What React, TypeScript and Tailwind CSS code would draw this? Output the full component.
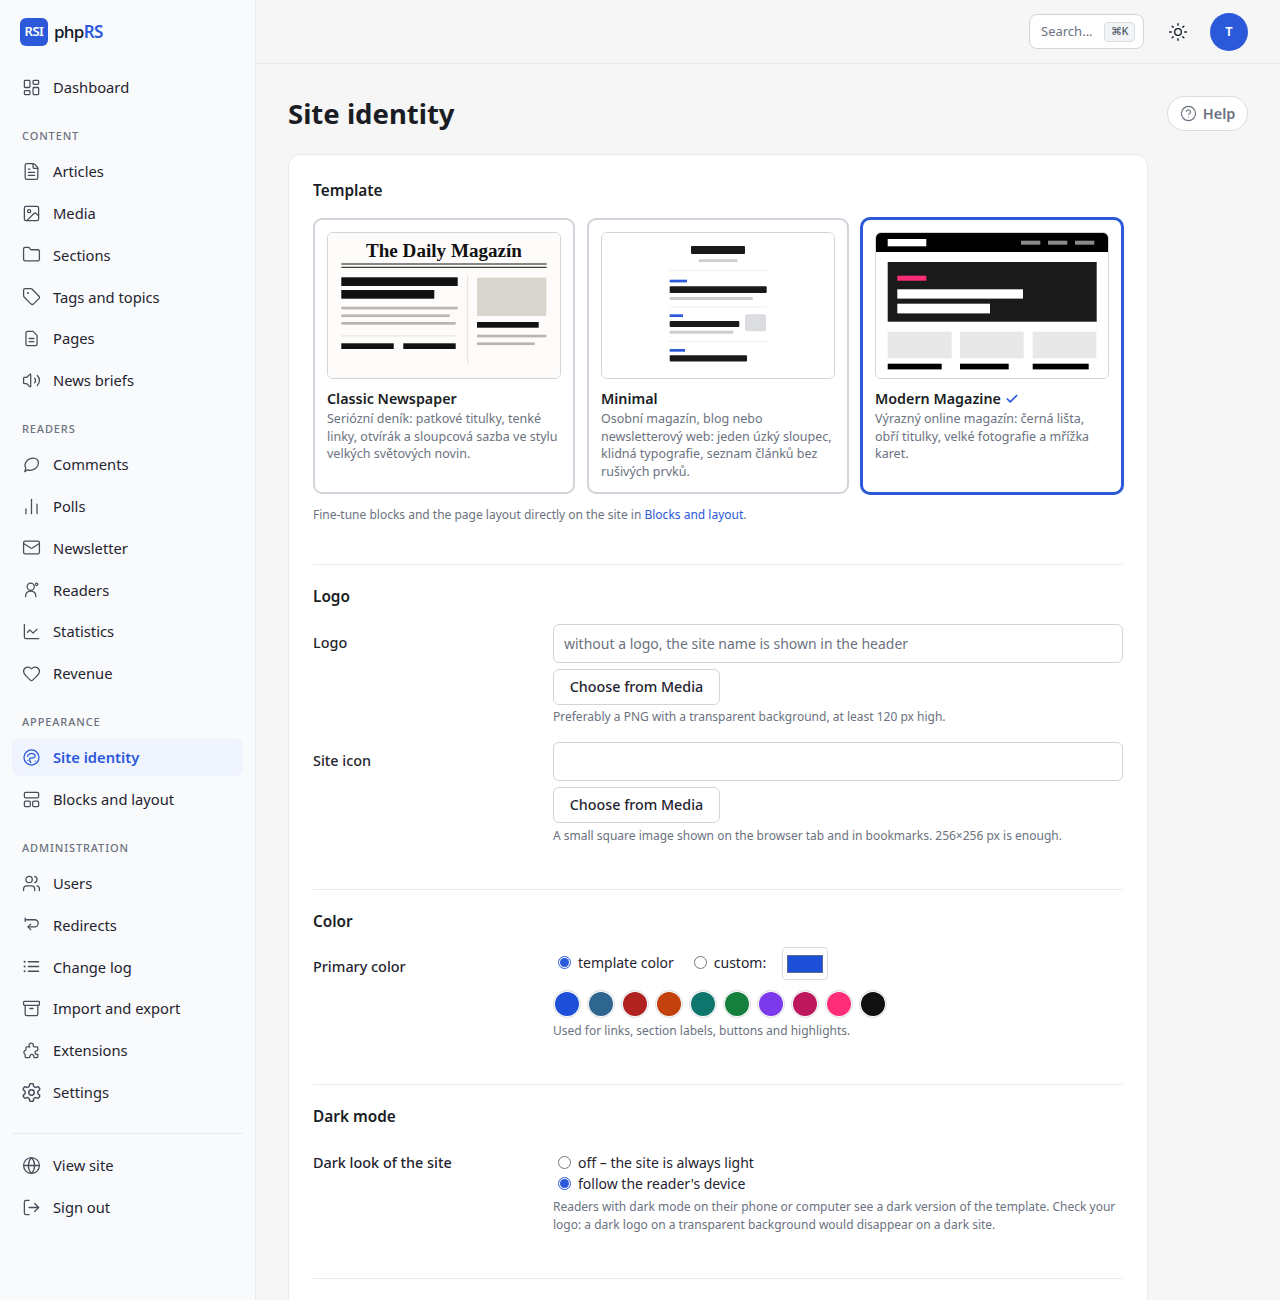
import React from "react";
import {
  LayoutDashboard, FileText, Image, Folder, Tag, Volume2, ChartNoAxesColumn, Mail, ChartLine, Heart, Users, Archive, Globe, LogOut, Sun, CircleHelp, Check,
} from "lucide-react";

const sw = 1.6;

function Svg({ children, vb = "0 0 24 24", strokeWidth, ...p }: any) {
  return (
    <svg viewBox={vb} fill="none" stroke="currentColor" strokeWidth={strokeWidth ?? sw} strokeLinecap="round" strokeLinejoin="round" {...p}>
      {children}
    </svg>
  );
}
function PageIcon(p: any) {
  return <Svg {...p}><path d="M14 3H7a2 2 0 0 0-2 2v14a2 2 0 0 0 2 2h10a2 2 0 0 0 2-2V8z" /><path d="M9 12h6M9 16h6" /></Svg>;
}
function ReaderIcon(p: any) {
  return <Svg {...p}><circle cx="11" cy="8.5" r="4.5" /><path d="M4.500 21c0-4.500 2.500-7 6.500-7s6.500 2.500 6.500 7" /><circle cx="18.500" cy="5.500" r="1.500" /></Svg>;
}
function BlocksIcon(p: any) {
  return <Svg {...p}><rect x="3" y="3" width="18" height="7" rx="1.5" /><rect x="3" y="14" width="7.5" height="7" rx="1.5" /><rect x="13.5" y="14" width="7.5" height="7" rx="1.5" /></Svg>;
}
function RedirectIcon(p: any) {
  return <Svg {...p}><path d="M4 4v4M4 6h12a4.500 4.500 0 0 1 0 9H8" /><path d="M11 11.500 7.500 15l3.500 3.500" /></Svg>;
}
function CommentIcon(p: any) {
  return <Svg {...p}><path d="M3.500 21l1.300-4.800C3.800 15 3.500 13.800 3.800 12.300 4.500 7.500 9 4 14 4c4.500 0 7 2.800 6.700 6.500-.4 5.200-5 8.800-10.200 8.800-1.300 0-2.400-.2-3.300-.6z" /></Svg>;
}
function PaletteIcon(p: any) {
  return <Svg {...p}><circle cx="12" cy="12" r="9.500" /><path d="M6.800 10.500C7.800 7.500 11.500 6 14.800 7.500c2.200 1 2.500 4 .4 4.800-1.800.7-3.700-.5-5 .7-1 1-.5 3.500.8 5.500" /><path d="M7.500 15.500h.01M17 16.500h.01" /></Svg>;
}
function ListDots(p: any) {
  return <Svg {...p}><path d="M8 6h13M8 12h13M8 18h13" /><circle cx="3.300" cy="6" r="1.300" fill="currentColor" stroke="none" /><circle cx="3.300" cy="12" r="1.300" fill="currentColor" stroke="none" /><circle cx="3.300" cy="18" r="1.300" fill="currentColor" stroke="none" /></Svg>;
}
function PuzzleIcon(p: any) {
  return <Svg {...p}><path d="M10 7.500C8.500 6.500 8.300 4 10.500 3c2-.8 4 .6 3.800 2.500-.1 1 .2 1.800 1.200 1.800H19c.8 0 1 .5 1 1v3.200c0 .8-.700 1-1.300 1-2.200 0-2.700 2-2 3.200.6 1 1.800 1.300 2.600 1.100.6-.1.700.3.700.8V20c0 .6-.4 1-1 1h-3.200c-.8 0-.9-.6-.800-1.200.3-1.500-.8-2.800-2.500-2.800s-2.800 1.300-2.500 2.800c.1.600 0 1.200-.8 1.200H5c-.6 0-1-.4-1-1v-2.500c0-.8-.500-1-1-1.500-1.300-1.400-.5-4 1.500-4.200.5 0 .5-.6.500-1V8.500c0-.6.400-1 1-1z" /></Svg>;
}
function GearIcon(p: any) {
  return (
    <Svg vb="1.500 1.500 21 21" {...p}>
      <path d="M12.220 2h-.44a2 2 0 0 0-2 2v.18a2 2 0 0 1-1 1.730l-.43.25a2 2 0 0 1-2 0l-.15-.08a2 2 0 0 0-2.730.73l-.22.38a2 2 0 0 0 .73 2.730l.15.1a2 2 0 0 1 1 1.720v.51a2 2 0 0 1-1 1.740l-.15.09a2 2 0 0 0-.73 2.730l.22.38a2 2 0 0 0 2.730.73l.15-.08a2 2 0 0 1 2 0l.43.25a2 2 0 0 1 1 1.730V20a2 2 0 0 0 2 2h.44a2 2 0 0 0 2-2v-.18a2 2 0 0 1 1-1.730l.43-.25a2 2 0 0 1 2 0l.15.08a2 2 0 0 0 2.730-.73l.22-.39a2 2 0 0 0-.73-2.730l-.15-.08a2 2 0 0 1-1-1.740v-.5a2 2 0 0 1 1-1.740l.15-.09a2 2 0 0 0 .73-2.730l-.22-.38a2 2 0 0 0-2.730-.73l-.15.08a2 2 0 0 1-2 0l-.43-.25a2 2 0 0 1-1-1.730V4a2 2 0 0 0-2-2z" />
      <circle cx="12" cy="12" r="3" />
    </Svg>
  );
}

type Item = { t: string; i: any; active?: boolean };
function NavItem({ t, i: I, active }: Item) {
  return (
    <a className={`flex h-[38.5px] items-center gap-[12px] rounded-lg px-2.5 text-[14.72px] ${active ? "bg-[#eff4fe] font-semibold text-[#2b59d9]" : "text-[#1f2430]"}`}>
      <I className={`h-[19px] w-[19px] shrink-0 ${active ? "text-[#2b59d9]" : "text-[#474d59]"}`} strokeWidth={sw} />
      <span>{t}</span>
    </a>
  );
}
function NavGroup({ label, items }: { label: string; items: Item[] }) {
  return (
    <div className="mt-[21.5px]">
      <div className="mb-[8px] px-2.5 text-[11px] leading-[16px] font-medium tracking-[0.08em] text-[#6b7280]">{label}</div>
      <div className="flex flex-col gap-[3.3px]">
        {items.map((x) => <NavItem key={x.t} {...x} />)}
      </div>
    </div>
  );
}

function Sidebar() {
  return (
    <aside className="flex h-full w-[256px] shrink-0 flex-col border-r border-[#e8eaee] bg-[#f9fafb] px-3">
      <div className="flex h-[64px] items-center gap-1.5 px-2">
        <div className="flex h-7 w-7 items-center justify-center rounded-md bg-[#2b59d9] text-[13px] font-semibold tracking-[-0.04em] text-white">RSI</div>
        <div className="text-[17px] font-medium tracking-[-0.04em] text-[#111827]">php<span className="font-semibold text-[#2b59d9]">RS</span></div>
      </div>
      <div className="mt-[4px]"><NavItem t="Dashboard" i={LayoutDashboard} /></div>
      <NavGroup label="CONTENT" items={[
        { t: "Articles", i: FileText }, { t: "Media", i: Image }, { t: "Sections", i: Folder }, { t: "Tags and topics", i: Tag }, { t: "Pages", i: PageIcon }, { t: "News briefs", i: Volume2 },
      ]} />
      <NavGroup label="READERS" items={[
        { t: "Comments", i: CommentIcon }, { t: "Polls", i: ChartNoAxesColumn }, { t: "Newsletter", i: Mail }, { t: "Readers", i: ReaderIcon }, { t: "Statistics", i: ChartLine }, { t: "Revenue", i: Heart },
      ]} />
      <NavGroup label="APPEARANCE" items={[
        { t: "Site identity", i: PaletteIcon, active: true }, { t: "Blocks and layout", i: BlocksIcon },
      ]} />
      <NavGroup label="ADMINISTRATION" items={[
        { t: "Users", i: Users }, { t: "Redirects", i: RedirectIcon }, { t: "Change log", i: ListDots }, { t: "Import and export", i: Archive }, { t: "Extensions", i: PuzzleIcon }, { t: "Settings", i: GearIcon },
      ]} />
      <div className="mt-[22px] mb-[12px] border-t border-[#e8eaee]" />
      <div className="flex flex-col gap-[3.3px]">
        <NavItem t="View site" i={Globe} />
        <NavItem t="Sign out" i={LogOut} />
      </div>
    </aside>
  );
}

const VB = "1 1 232 145";
function ClassicSvg() {
  const k = "#111111", g = "#b8b6ae";
  return (
    <svg viewBox={VB} className="block h-full w-full">
      <rect width="234" height="147" fill="#fdfcfa" />
      <text x="117" y="24.500" textAnchor="middle" fontFamily="'Liberation Serif', serif" fontWeight="700" fontSize="18.500" fill={k} textLength="156" lengthAdjust="spacingAndGlyphs">The Daily Magazín</text>
      <rect x="14.300" y="31.500" width="205.400" height="1" fill={k} />
      <rect x="14.300" y="34.800" width="205.400" height="1" fill={k} />
      <rect x="14.300" y="45.300" width="116.400" height="8.700" fill={k} />
      <rect x="14.300" y="58" width="93" height="8.700" fill={k} />
      <rect x="14.300" y="74.700" width="116.400" height="2.700" fill={g} />
      <rect x="14.300" y="82.400" width="108.400" height="2.700" fill={g} />
      <rect x="14.300" y="90" width="114.400" height="2.700" fill={g} />
      <rect x="14.300" y="103.300" width="114.400" height="1.200" fill="#e8e6e0" />
      <rect x="14.300" y="111.300" width="52.400" height="5.700" fill={k} />
      <rect x="76.300" y="111.300" width="52.400" height="5.700" fill={k} />
      <rect x="140.200" y="43.700" width="1" height="88.300" fill="#e0ded8" />
      <rect x="150" y="45.700" width="69.300" height="38.300" fill="#d8d6cf" />
      <rect x="150" y="90" width="61.700" height="5.700" fill={k} />
      <rect x="150" y="102.700" width="69.300" height="2.700" fill={g} />
      <rect x="150" y="110.400" width="57.700" height="2.700" fill={g} />
    </svg>
  );
}
function MinimalSvg() {
  const k = "#1a1a1a", g = "#cccccc", b = "#2b59d9", l = "#eeeeee";
  const X = 68.7;
  return (
    <svg viewBox={VB} className="block h-full w-full">
      <rect width="234" height="147" fill="#ffffff" />
      <rect x="90" y="14" width="54" height="8" rx="1" fill={k} />
      <rect x="97.700" y="27.300" width="38.600" height="2.700" fill={g} />
      <rect x={X} y="38" width="97" height="1" fill={l} />
      <rect x={X} y="47.700" width="17.300" height="2.700" fill={b} />
      <rect x={X} y="54.300" width="97" height="6.700" rx="1" fill={k} />
      <rect x={X} y="65" width="83" height="3" fill={g} />
      <rect x={X} y="74.500" width="97" height="1" fill={l} />
      <rect x={X} y="82.300" width="13.300" height="2.700" fill={b} />
      <rect x={X} y="89" width="69.600" height="6" rx="1" fill={k} />
      <rect x={X} y="98.700" width="63.600" height="3" fill={g} />
      <rect x="144" y="82.300" width="21" height="17" rx="2" fill="#dcdde0" />
      <rect x={X} y="109" width="97" height="1" fill={l} />
      <rect x={X} y="117" width="15.300" height="2.700" fill={b} />
      <rect x={X} y="123.300" width="77.300" height="6.300" rx="1" fill={k} />
    </svg>
  );
}
function ModernSvg() {
  return (
    <svg viewBox={VB} className="block h-full w-full">
      <rect width="234" height="147" fill="#ffffff" />
      <rect width="234" height="20" fill="#000000" />
      <rect x="12.700" y="7" width="38.600" height="7.300" fill="#ffffff" />
      <rect x="146" y="8.700" width="19.300" height="4" fill="#8a8a8a" />
      <rect x="173" y="8.700" width="19.300" height="4" fill="#8a8a8a" />
      <rect x="200" y="8.700" width="19.300" height="4" fill="#8a8a8a" />
      <rect x="12.700" y="30" width="209" height="59.700" fill="#1a1a1a" />
      <rect x="22.300" y="43.700" width="29" height="5" fill="#ff2d78" />
      <rect x="22.300" y="57.300" width="125.700" height="9.300" fill="#ffffff" />
      <rect x="22.300" y="71.700" width="92.700" height="9.700" fill="#ffffff" />
      <rect x="12.700" y="99.700" width="64" height="26.600" fill="#e8e8e8" />
      <rect x="85" y="99.700" width="63.700" height="26.600" fill="#e8e8e8" />
      <rect x="157.700" y="99.700" width="63.600" height="26.600" fill="#e8e8e8" />
      <rect x="12.700" y="131.700" width="54" height="5.700" fill="#000000" />
      <rect x="85" y="131.700" width="48.700" height="5.700" fill="#000000" />
      <rect x="157.700" y="131.700" width="56" height="5.700" fill="#000000" />
    </svg>
  );
}

function TemplateCard({ name, desc, art, active }: { name: string; desc: string; art: React.ReactNode; active?: boolean }) {
  return (
    <div className={`h-[276px] rounded-[9px] border-2 bg-white p-3 ${active ? "border-[#2b59d9] ring-1 ring-[#2b59d9]" : "border-[#d1d5db]"}`}>
      <div className="h-[147px] overflow-hidden rounded-md border border-[#d1d5db]">{art}</div>
      <div className="mt-[10px] flex items-center gap-1 text-[14.300px] leading-[20px] font-semibold text-[#1a1d24]">
        {name}
        {active && <Check className="h-[14px] w-[14px] text-[#2b59d9]" strokeWidth={3} />}
      </div>
      <p className="mt-[1px] text-[12.500px] leading-[17.600px] text-[#6b7280]">{desc}</p>
    </div>
  );
}

const Hr = () => <div className="border-t border-[#e8eaee]" />;
const H2 = ({ children }: { children: React.ReactNode }) => <h2 className="text-[15.360px] leading-[24px] font-semibold text-[#1a1d24]">{children}</h2>;
const Label = ({ children }: { children: React.ReactNode }) => <div className="w-[240px] shrink-0 text-[14.400px] leading-[22px] font-medium text-[#1f2430]">{children}</div>;
const Help = ({ children }: { children: React.ReactNode }) => <p className="text-[12px] leading-[18px] text-[#6b7280]">{children}</p>;

function Btn() {
  return <button className="flex h-[36px] w-[167px] items-center justify-center rounded-md border border-[#d1d5db] bg-white text-[14.300px] font-medium text-[#1f2430]">Choose from Media</button>;
}
function Radio({ on, label }: { on?: boolean; label: string }) {
  return (
    <label className="flex items-center text-[14px] leading-[21px] text-[#1f2430]">
      <span className={`mx-[5px] flex h-[13px] w-[13px] items-center justify-center rounded-full border ${on ? "border-[#2b59d9]" : "border-[#767676]"} bg-white`}>
        {on && <span className="h-[9px] w-[9px] rounded-full bg-[#2b59d9]" />}
      </span>
      <span className="ml-[2px]">{label}</span>
    </label>
  );
}

const swatchClasses = ["bg-[#1d4fd8]", "bg-[#2f6690]", "bg-[#b0221f]", "bg-[#c2410c]", "bg-[#0f766e]", "bg-[#15803d]", "bg-[#7c3aed]", "bg-[#be185d]", "bg-[#ff2d78]", "bg-[#111111]"];

export default function App() {
  return (
    <div className="flex h-[1300px] overflow-hidden bg-[#f6f6f6] font-['Noto_Sans',sans-serif]">
      <Sidebar />
      <div className="min-w-0 flex-1">
        <header className="flex h-[64px] items-center justify-end border-b border-[#e8eaee] pr-8">
          <div className="flex h-[35px] w-[115px] items-center justify-between rounded-lg border border-[#d1d5db] bg-white pr-2 pl-[11px] text-[13px] text-[#6b7280]">
            <span>Search...</span>
            <span className="flex h-5 w-[31px] items-center justify-center rounded border border-[#d9dce1] bg-[#f3f4f6] text-[11px] font-medium text-[#4b5563]">⌘K</span>
          </div>
          <Sun className="mr-[22px] ml-6 h-5 w-5 text-[#111827]" strokeWidth={1.6} />
          <div className="flex h-[38px] w-[38px] items-center justify-center rounded-full bg-[#2b59d9] text-[13px] font-semibold text-white">T</div>
        </header>
        <div className="flex items-start justify-between px-8 pt-[32px]">
          <h1 className="text-[27.500px] leading-[36px] font-bold text-[#1a1d24]">Site identity</h1>
          <button className="flex h-[35px] w-[81px] items-center justify-center gap-1.5 rounded-full border border-[#d9dce1] bg-white text-[14.500px] font-semibold text-[#6b7280]">
            <CircleHelp className="h-[17px] w-[17px]" strokeWidth={1.6} /> Help
          </button>
        </div>
        <main className="mx-8 mt-[22px] w-[860px] rounded-xl border border-[#e8eaee] bg-white px-6 pt-[24px] pb-10">
          <H2>Template</H2>
          <div className="mt-[15px] grid grid-cols-3 gap-3">
            <TemplateCard name="Classic Newspaper" art={<ClassicSvg />} desc="Seriózní deník: patkové titulky, tenké linky, otvírák a sloupcová sazba ve stylu velkých světových novin." />
            <TemplateCard name="Minimal" art={<MinimalSvg />} desc="Osobní magazín, blog nebo newsletterový web: jeden úzký sloupec, klidná typografie, seznam článků bez rušivých prvků." />
            <TemplateCard active name="Modern Magazine" art={<ModernSvg />} desc="Výrazný online magazín: černá lišta, obří titulky, velké fotografie a mřížka karet." />
          </div>
          <p className="mt-[11.500px] mb-[40.500px] text-[12px] leading-[18px] text-[#6b7280]">
            Fine-tune blocks and the page layout directly on the site in <span className="text-[#2b59d9]">Blocks and layout</span>.
          </p>
          <Hr />
          <div className="pt-[20px]">
            <H2>Logo</H2>
            <div className="mt-[15px] flex">
              <Label><div className="pt-[8px]">Logo</div></Label>
              <div className="flex-1">
                <div className="flex h-[39px] items-center rounded-md border border-[#d1d5db] bg-white px-[10px] text-[14px] text-[#6b7280]">without a logo, the site name is shown in the header</div>
                <div className="mt-[6px]"><Btn /></div>
                <div className="mt-[3px]"><Help>Preferably a PNG with a transparent background, at least 120 px high.</Help></div>
              </div>
            </div>
            <div className="mt-[16px] flex">
              <Label><div className="pt-[8px]">Site icon</div></Label>
              <div className="flex-1">
                <div className="h-[39px] rounded-md border border-[#d1d5db] bg-white" />
                <div className="mt-[6px]"><Btn /></div>
                <div className="mt-[4px]"><Help>A small square image shown on the browser tab and in bookmarks. 256×256 px is enough.</Help></div>
              </div>
            </div>
          </div>
          <div className="mt-[44px]"><Hr /></div>
          <div className="pt-[20px]">
            <H2>Color</H2>
            <div className="mt-[12px] flex">
              <Label><div className="pt-[10px]">Primary color</div></Label>
              <div className="flex-1">
                <div className="flex h-[33px] items-center">
                  <Radio on label="template color" />
                  <div className="ml-[15px]"><Radio label="custom:" /></div>
                  <div className="mt-[2px] ml-[16px] flex h-[33px] w-[46px] items-center justify-center rounded border border-[#d9dce1] bg-white">
                    <div className="h-[18px] w-[36px] border border-[#5a6b8c] bg-[#1d4fd8]" />
                  </div>
                </div>
                <div className="mt-[11px] flex gap-[6px]">
                  {swatchClasses.map((c) => (
                    <div key={c} className="flex h-[28px] w-[28px] items-center justify-center rounded-full border border-[#d9dce1] bg-white">
                      <div className={`h-6 w-6 rounded-full ${c}`} />
                    </div>
                  ))}
                </div>
                <div className="mt-[4px]"><Help>Used for links, section labels, buttons and highlights.</Help></div>
              </div>
            </div>
          </div>
          <div className="mt-[44px]"><Hr /></div>
          <div className="pt-[20px]">
            <H2>Dark mode</H2>
            <div className="mt-[12px] flex">
              <Label><div className="pt-[10.500px]">Dark look of the site</div></Label>
              <div className="flex-1">
                <div className="pt-[11px]">
                  <Radio label="off – the site is always light" />
                  <Radio on label="follow the reader's device" />
                </div>
                <div className="mt-[4px]"><Help>Readers with dark mode on their phone or computer see a dark version of the template. Check your logo: a dark logo on a transparent background would disappear on a dark site.</Help></div>
              </div>
            </div>
          </div>
          <div className="mt-[44px]"><Hr /></div>
          <div className="h-[100px]" />
        </main>
      </div>
    </div>
  );
}
